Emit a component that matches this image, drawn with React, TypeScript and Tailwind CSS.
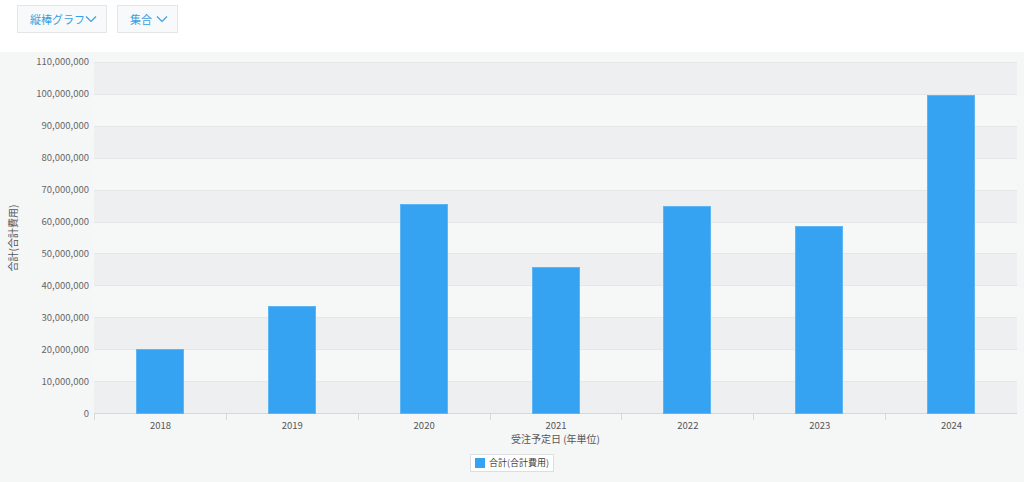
import React from "react";

const years = ["2018","2019","2020","2021","2022","2023","2024"];
const vals = [20.3,33.9,65.5,46,64.9,58.6,99.8];
const ticks = [110,100,90,80,70,60,50,40,30,20,10,0];
const fmt = (n:number)=> n===0?"0":(n*1000000).toLocaleString("en-US");

function Chevron(){return <svg width="12" height="8" viewBox="0 0 12 8"><path d="M1 1.5l5 5 5-5" fill="none" stroke="#3a9fe0" strokeWidth="1.2"/></svg>;}

export default function App(){
  return (
    <div className="w-[1024px] h-[482px] bg-white flex flex-col overflow-hidden" style={{fontFamily:'"Noto Sans CJK JP","Noto Sans",sans-serif'}}>
      <div className="h-[52px] flex items-start gap-[10px] pl-[17px] pt-[5px]">
        <div className="h-[28px] w-[90px] border border-[#e3e7e8] bg-[#f7f9fa] flex items-center justify-between pl-[12px] pr-[9px] text-[11px] text-[#3a9fe0]">縦棒グラフ<Chevron/></div>
        <div className="h-[28px] w-[61px] border border-[#e3e7e8] bg-[#f7f9fa] flex items-center justify-between pl-[12px] pr-[9px] text-[11px] text-[#3a9fe0]">集合<Chevron/></div>
      </div>
      <div className="flex-1 bg-[#f5f6f6] relative">
        <div className="absolute left-[12px] top-[186px] w-0 h-0">
          <div className="-rotate-90 origin-center text-[10px] text-[#555] whitespace-nowrap -translate-x-1/2 -translate-y-1/2 absolute">合計(合計費用)</div>
        </div>
        {ticks.map((t,i)=>(
          <div key={t} className="absolute left-0 w-[89px] text-right text-[9.5px] text-[#666] leading-none" style={{top:10+i*32-5}}>{fmt(t)}</div>
        ))}
        <div className="absolute left-[94px] top-[10px] w-[923px] h-[352px] flex flex-col border-b border-[#d6d9db]">
          {ticks.slice(1).map((t,i)=>(
            <div key={t} className={"h-[32px] border-t border-[#e4e6e8] " + (i%2===0?"bg-[#eeeff1]":"bg-[#f6f7f7]")}/>
          ))}
        </div>
        <div className="absolute left-[94px] top-[10px] w-[923px] h-[352px] flex items-end">
          {vals.map((v,i)=>(
            <div key={i} className="flex-1 flex justify-center items-end h-full">
              <div className="w-[48px] bg-[#35a3f1] border border-[#5db6f3]" style={{height:v*3.2}}/>
            </div>
          ))}
        </div>
        <div className="absolute left-[94px] top-[362px] w-[923px] flex">
          {years.map((y,i)=>(
            <div key={y} className="flex-1 border-l border-[#d6d9db] h-[6px] relative">
              <div className="absolute top-[4px] w-full text-center text-[9.5px] text-[#555]">{y}</div>
            </div>
          ))}
        </div>
        <div className="absolute left-[94px] top-[379px] w-[923px] text-center text-[10px] text-[#555]">受注予定日 (年単位)</div>
        <div className="absolute left-[470px] top-[402px] h-[18px] px-[4px] border border-[#dcdfe1] bg-white flex items-center gap-[4px] text-[9px] text-[#444]">
          <div className="w-[10px] h-[10px] bg-[#35a3f1]"/>合計(合計費用)
        </div>
      </div>
    </div>
  );
}
